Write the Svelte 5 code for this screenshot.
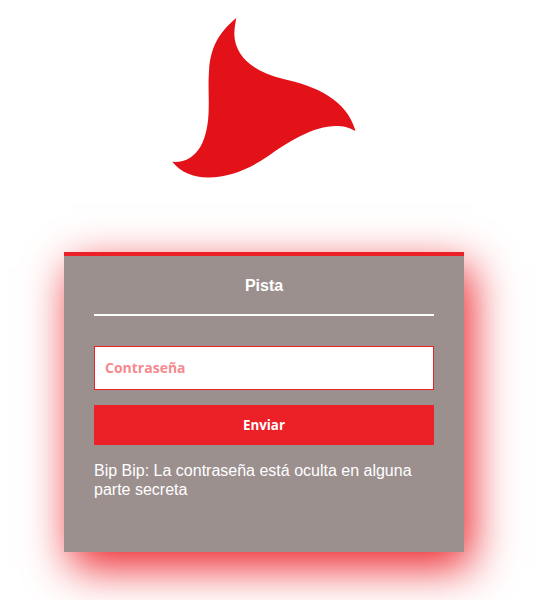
<script>
  let password = $state('');
</script>

<main>
  <svg class="logo" viewBox="0 0 200 200" role="img" aria-label="Logo">
    <path
      d="M72.3 18C71.300 23 70.300 29 70.300 34C70.600 57 91 72.500 119.500 79C152 86 183 100 191.600 131C184 127 179 126 172.500 126C149 126 124 142 105 155.500C88 167.500 66 177.500 44.300 177.500C29 177.500 17 172.500 8.300 161.800C33 163.500 44.500 141 44.700 108C45 94 44 84 45.100 70C46.300 49 54 33 72.300 18Z"
    />
  </svg>

  <form class="card" onsubmit={(event) => event.preventDefault()}>
    <h1>Pista</h1>
    <input
      type="password"
      placeholder="Contraseña"
      aria-label="Contraseña"
      autocomplete="off"
      bind:value={password}
    />
    <button type="submit">Enviar</button>
    <p>Bip Bip: La contraseña está oculta en alguna parte secreta</p>
  </form>
</main>

<style>
  :global(body) {
    margin: 0;
    background: #fff;
  }

  main {
    display: flex;
    flex-direction: column;
    align-items: center;
    padding: 0 27px 48px 0;
    font-family: 'Liberation Sans', Arial, sans-serif;
    font-size: 16px;
  }

  .logo {
    width: 200px;
    height: 200px;
    fill: #e31118;
  }

  .card {
    box-sizing: border-box;
    width: 100%;
    max-width: 400px;
    margin-top: 52px;
    padding: 20px 30px 53px;
    border-top: 4px solid #ec2027;
    background: #9c908f;
    box-shadow: 7px 15px 42px #ec2027;
    color: #fff;
  }

  h1 {
    margin: 0 0 30px;
    padding-bottom: 18px;
    border-bottom: 2px solid #fff;
    font-size: 16px;
    line-height: 20px;
    text-align: center;
  }

  input,
  button {
    display: block;
    box-sizing: border-box;
    width: 100%;
    margin: 0 0 15px;
    border-radius: 0;
    font-family: 'Open Sans', 'Noto Sans', sans-serif;
    font-weight: 700;
  }

  input {
    height: 44px;
    padding: 0 10px 2px;
    border: 1px solid #ec2027;
    background: #fff;
    color: #ec2027;
    font-size: 14px;
    outline: none;
  }

  input::placeholder {
    color: #f58a8e;
    opacity: 1;
  }

  button {
    height: 40px;
    padding: 0;
    border: 0;
    background: #ec2027;
    color: #fff;
    cursor: pointer;
  }

  p {
    margin: 16px 0 0;
    line-height: 19px;
  }
</style>
